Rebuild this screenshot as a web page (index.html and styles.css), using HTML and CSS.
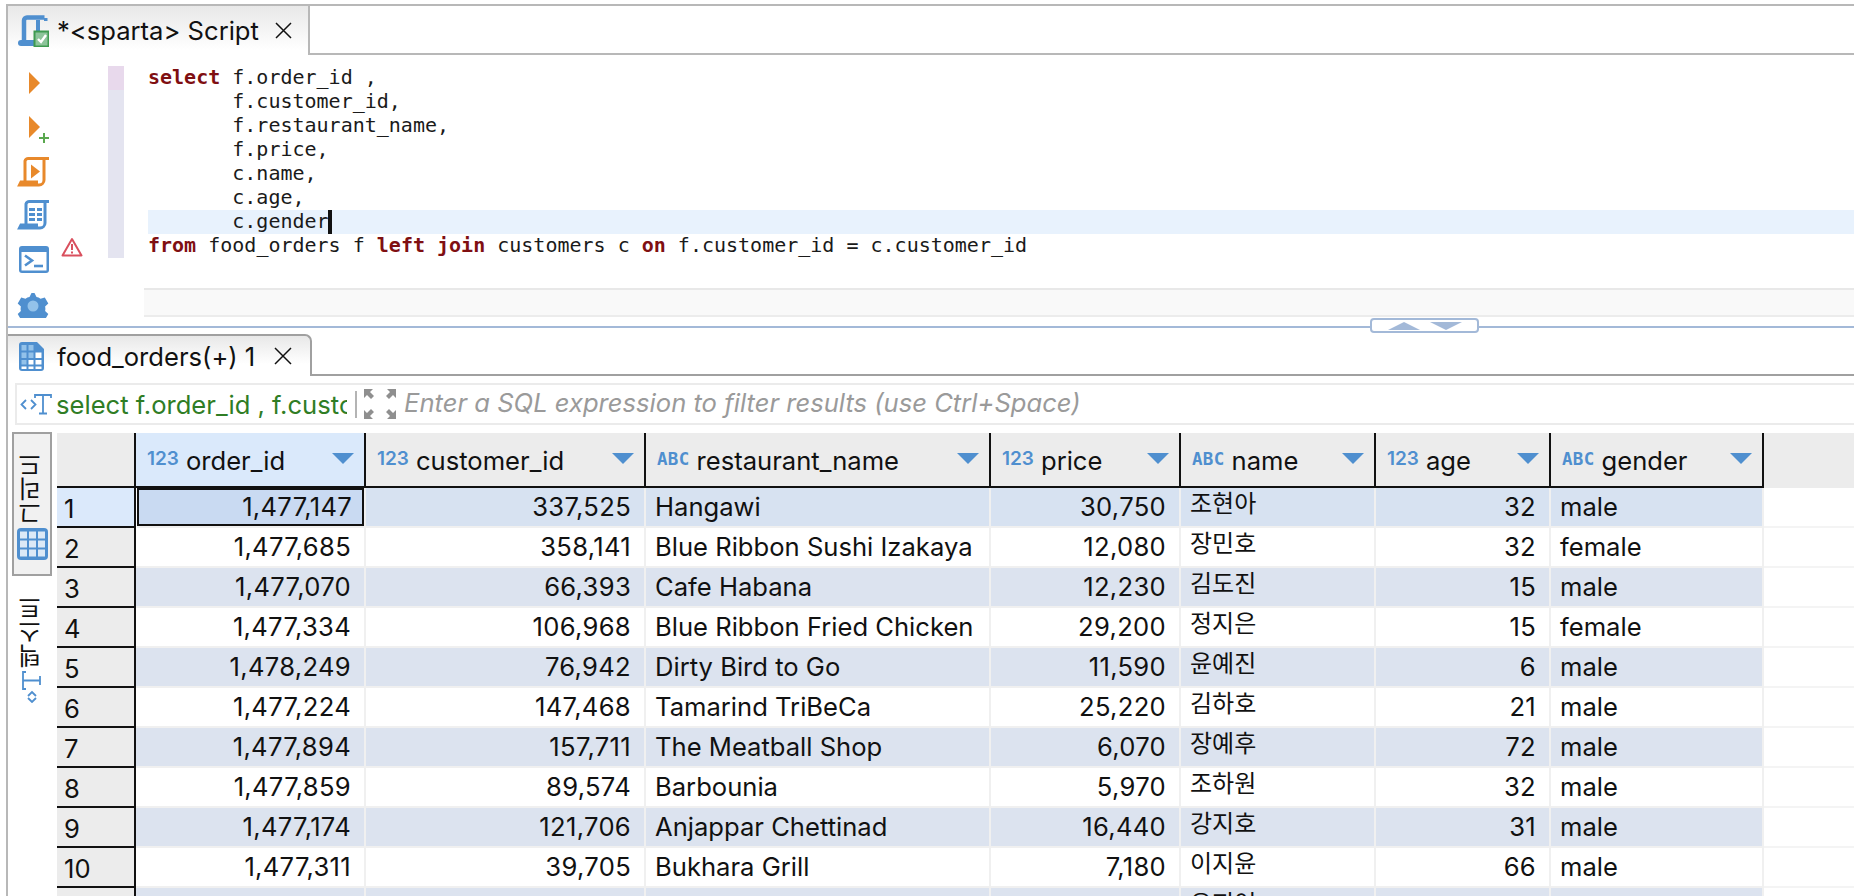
FILE: index.html
```html
<!DOCTYPE html>
<html lang="ko">
<head>
<meta charset="utf-8">
<title>DBeaver Script</title>
<link rel="stylesheet" href="styles.css">
</head>
<body>
<div class="app">
  <div class="tabbar">
    <div class="editor-tab">
      <svg class="tab-icon" width="32" height="32" viewBox="0 0 32 32"><path d="M7 25V5.500A3 3 0 0 1 10 2.500H27.500" fill="none" stroke="#4f8fcf" stroke-width="4.500"/><path d="M27 3H30.500V6H27z" fill="#4f8fcf"/><path d="M21 5V25" stroke="#4f8fcf" stroke-width="4"/><path d="M1 28a3 3 0 0 1 3-3H20v6H4a3 3 0 0 1-3-3z" fill="#4f8fcf"/><rect x="17.500" y="16.500" width="14" height="15" fill="#8dc49a" stroke="#3f9a50" stroke-width="2"/><path d="M21 24l3 3 5-7" fill="none" stroke="#fff" stroke-width="2.400"/></svg>
      <span class="tab-label">*&lt;sparta&gt; Script</span>
      <svg class="close" width="17" height="17" viewBox="0 0 17 17"><path d="M1 1L16 16M16 1L1 16" stroke="#111" stroke-width="1.500"/></svg>
    </div>
    <div class="tabbar-rest"></div>
  </div>

  <div class="editor">
    <div class="side-tools">
      <div class="tool"><svg width="44" height="44" viewBox="0 0 44 44"><path d="M21 11L32 22L21 33z" fill="#e8892b"/></svg></div>
      <div class="tool"><svg width="44" height="44" viewBox="0 0 44 44"><path d="M21 11L32 22L21 33z" fill="#e8892b"/><path d="M36 28V38M31 33H41" stroke="#5aa84f" stroke-width="2"/></svg></div>
      <div class="tool"><svg width="44" height="44" viewBox="0 0 44 44"><path d="M17 32V12A3.500 3.500 0 0 1 20.500 9.500H41" fill="none" stroke="#e8892b" stroke-width="3"/><path d="M36 10V31A5 5 0 0 1 31 36H11.500L13 33H30" fill="none" stroke="#e8892b" stroke-width="3"/><path d="M23 15.500L32 22.500L23 29.500z" fill="#e8892b"/></svg></div>
      <div class="tool"><svg width="44" height="44" viewBox="0 0 44 44"><path d="M18 31V11A3.500 3.500 0 0 1 21.500 8.500H41" fill="none" stroke="#4f8fcf" stroke-width="3"/><path d="M37 9V30A5 5 0 0 1 32 35H11.500L13 32H30" fill="none" stroke="#4f8fcf" stroke-width="3"/><path d="M21 15h6v3h-6zM29 15h5v3h-5zM21 20h6v3h-6zM29 20h5v3h-5zM21 25h6v3h-6zM29 25h5v3h-5z" fill="#4f8fcf"/></svg></div>
      <div class="tool">
        <svg width="44" height="44" viewBox="0 0 44 44"><rect x="11" y="9" width="30" height="27" rx="3" fill="#4f8fcf"/><rect x="13.500" y="15" width="25" height="18.500" fill="#fff"/><path d="M17 18.500L24 23.500L17 28.500" fill="none" stroke="#4f8fcf" stroke-width="2.600"/><path d="M26 29H35" stroke="#4f8fcf" stroke-width="2.600"/></svg>
        <svg class="warn" width="22" height="20" viewBox="0 0 22 20"><path d="M11 2L20.500 18.500H1.500z" fill="#fff" stroke="#d9505e" stroke-width="2" stroke-linejoin="round"/><path d="M11 7V13M11 14.500V16.500" stroke="#d9505e" stroke-width="2"/></svg>
      </div>
      <div class="tool"><svg width="44" height="44" viewBox="0 0 44 44"><path d="M22.500 10l2 4a9 9 0 0 1 4 1.700l4.300-1.200 3.500 6-3.200 3a9 9 0 0 1 0 4.500l3.200 3-3.500 6-4.300-1.200a9 9 0 0 1-4 1.700l-2 4h-3l-2-4a9 9 0 0 1-4-1.700l-4.300 1.200-3.500-6 3.200-3a9 9 0 0 1 0-4.500l-3.200-3 3.500-6 4.300 1.200a9 9 0 0 1 4-1.700l2-4z" transform="translate(4 2)" fill="#4f8fcf"/><circle cx="25" cy="25" r="5.500" fill="#93c2ea"/></svg></div>
    </div>
    <div class="gutter"><div class="gutter-first"></div></div>
    <div class="code-area">
      <div class="code">
        <div class="line"><b>select</b> f.order_id ,</div>
        <div class="line">       f.customer_id,</div>
        <div class="line">       f.restaurant_name,</div>
        <div class="line">       f.price,</div>
        <div class="line">       c.name,</div>
        <div class="line">       c.age,</div>
        <div class="line current">       c.gender<i class="caret"></i></div>
        <div class="line"><b>from</b> food_orders f <b>left</b> <b>join</b> customers c <b>on</b> f.customer_id = c.customer_id</div>
      </div>
      <div class="band"></div>
    </div>
  </div>

  <div class="splitter">
    <div class="handle">
      <svg width="32" height="8" viewBox="0 0 32 8"><path d="M16 0L32 8H0z" fill="#a3b9d8"/></svg>
      <svg width="32" height="8" viewBox="0 0 32 8"><path d="M0 0H32L16 8z" fill="#a3b9d8"/></svg>
    </div>
  </div>

  <div class="result-tabs">
    <div class="result-tab">
      <svg width="26" height="31" viewBox="0 0 26 31"><path d="M3 1H18L25 8V27a3 3 0 0 1-3 3H3a3 3 0 0 1-3-3V4a3 3 0 0 1 3-3z" fill="#4f8fcf"/><path d="M2.500 4h5v5.500h-5zM9.500 4h5v5.500h-5zM2.500 11.500h5V17h-5zM9.500 11.500h5V17h-5zM2.500 19h5v4.500h-5z" fill="#93c2ea"/><path d="M16.500 11.500h6V17h-6zM9.500 19h5v4.500h-5zM16.500 19h6v4.500h-6zM2.500 25.500h5V28h-5zM9.500 25.500h5V28h-5zM16.500 25.500h6V28h-6z" fill="#fff"/></svg>
      <span class="result-label">food_orders(+) 1</span>
      <svg class="close" width="18" height="18" viewBox="0 0 18 18"><path d="M1 1L17 17M17 1L1 17" stroke="#111" stroke-width="1.500"/></svg>
    </div>
  </div>

  <div class="filter">
    <svg class="t-icon" width="32" height="22" viewBox="0 0 32 22"><path d="M6 7L1.500 11.500L6 16M11 7L15.500 11.500L11 16" fill="none" stroke="#4f8fcf" stroke-width="1.800"/><path d="M15 5V2H31V5M23 2V20M19 20.500H27" fill="none" stroke="#4f8fcf" stroke-width="1.800"/></svg>
    <span class="filter-query">select f.order_id , f.customer_id</span>
    <span class="filter-sep"></span>
    <svg class="expand" width="32" height="30" viewBox="0 0 32 30"><path d="M0 0H9L6 3L10 7L7 10L3 6L0 9zM32 0H23L26 3L22 7L25 10L29 6L32 9zM0 30H9L6 27L10 23L7 20L3 24L0 21zM32 30H23L26 27L22 23L25 20L29 24L32 21z" fill="#8f8f8f"/></svg>
    <span class="filter-hint">Enter a SQL expression to filter results (use Ctrl+Space)</span>
  </div>

  <div class="results">
    <div class="view-tabs">
      <div class="view-tab active">
        <span class="view-label">그리드</span>
        <svg width="31" height="32" viewBox="0 0 31 32"><rect width="31" height="32" rx="4" fill="#4f8fcf"/><path d="M3 3.500h7v7H3zM12 3.500h7v7h-7zM21 3.500h7v7h-7zM3 12.500h7v7H3zM12 12.500h7v7h-7zM21 12.500h7v7h-7zM3 21.500h7v7H3zM12 21.500h7v7h-7zM21 21.500h7v7h-7z" fill="#dce9f6"/></svg>
      </div>
      <div class="view-tab">
        <span class="view-label">텍스트</span>
        <svg width="22" height="32" viewBox="0 0 22 32"><path d="M5 1H2V18H5M2 9.500H19M19 5V14" fill="none" stroke="#4f8fcf" stroke-width="1.800"/><path d="M7 25L11 21L15 25M7 27L11 31L15 27" fill="none" stroke="#4f8fcf" stroke-width="1.800"/></svg>
      </div>
    </div>
    <div class="grid">
      <div class="row head">
        <div class="hc corner"></div>
        <div class="hc focused"><span class="ty">123</span><span>order_id</span><i class="arrow"></i></div>
        <div class="hc"><span class="ty">123</span><span>customer_id</span><i class="arrow"></i></div>
        <div class="hc"><span class="ty abc">ABC</span><span>restaurant_name</span><i class="arrow"></i></div>
        <div class="hc"><span class="ty">123</span><span>price</span><i class="arrow"></i></div>
        <div class="hc"><span class="ty abc">ABC</span><span>name</span><i class="arrow"></i></div>
        <div class="hc"><span class="ty">123</span><span>age</span><i class="arrow"></i></div>
        <div class="hc"><span class="ty abc">ABC</span><span>gender</span><i class="arrow"></i></div>
        <div class="hfill"></div>
      </div>
      <div class="row first"><div class="rn">1</div><div class="c num sel">1,477,147</div><div class="c num">337,525</div><div class="c">Hangawi</div><div class="c num">30,750</div><div class="c ko">조현아</div><div class="c num">32</div><div class="c">male</div><div class="fill"></div></div>
      <div class="row"><div class="rn">2</div><div class="c num">1,477,685</div><div class="c num">358,141</div><div class="c">Blue Ribbon Sushi Izakaya</div><div class="c num">12,080</div><div class="c ko">장민호</div><div class="c num">32</div><div class="c">female</div><div class="fill"></div></div>
      <div class="row alt"><div class="rn">3</div><div class="c num">1,477,070</div><div class="c num">66,393</div><div class="c">Cafe Habana</div><div class="c num">12,230</div><div class="c ko">김도진</div><div class="c num">15</div><div class="c">male</div><div class="fill"></div></div>
      <div class="row"><div class="rn">4</div><div class="c num">1,477,334</div><div class="c num">106,968</div><div class="c">Blue Ribbon Fried Chicken</div><div class="c num">29,200</div><div class="c ko">정지은</div><div class="c num">15</div><div class="c">female</div><div class="fill"></div></div>
      <div class="row alt"><div class="rn">5</div><div class="c num">1,478,249</div><div class="c num">76,942</div><div class="c">Dirty Bird to Go</div><div class="c num">11,590</div><div class="c ko">윤예진</div><div class="c num">6</div><div class="c">male</div><div class="fill"></div></div>
      <div class="row"><div class="rn">6</div><div class="c num">1,477,224</div><div class="c num">147,468</div><div class="c">Tamarind TriBeCa</div><div class="c num">25,220</div><div class="c ko">김하호</div><div class="c num">21</div><div class="c">male</div><div class="fill"></div></div>
      <div class="row alt"><div class="rn">7</div><div class="c num">1,477,894</div><div class="c num">157,711</div><div class="c">The Meatball Shop</div><div class="c num">6,070</div><div class="c ko">장예후</div><div class="c num">72</div><div class="c">male</div><div class="fill"></div></div>
      <div class="row"><div class="rn">8</div><div class="c num">1,477,859</div><div class="c num">89,574</div><div class="c">Barbounia</div><div class="c num">5,970</div><div class="c ko">조하원</div><div class="c num">32</div><div class="c">male</div><div class="fill"></div></div>
      <div class="row alt"><div class="rn">9</div><div class="c num">1,477,174</div><div class="c num">121,706</div><div class="c">Anjappar Chettinad</div><div class="c num">16,440</div><div class="c ko">강지호</div><div class="c num">31</div><div class="c">male</div><div class="fill"></div></div>
      <div class="row"><div class="rn">10</div><div class="c num">1,477,311</div><div class="c num">39,705</div><div class="c">Bukhara Grill</div><div class="c num">7,180</div><div class="c ko">이지윤</div><div class="c num">66</div><div class="c">male</div><div class="fill"></div></div>
      <div class="row alt"><div class="rn"></div><div class="c num"></div><div class="c num"></div><div class="c"></div><div class="c num"></div><div class="c ko">유지연</div><div class="c num"></div><div class="c"></div><div class="fill"></div></div>
    </div>
  </div>
</div>
</body>
</html>
```

FILE: styles.css
```css
* { box-sizing: border-box; }
html, body { margin: 0; height: 896px; overflow: hidden; background: #fff; }
body { font-family: Inter, "Noto Sans CJK KR", sans-serif; font-size: 25.6px; color: #111; }

.app {
  margin: 4px 0 0 6px;
  height: 892px;
  border-top: 2px solid #b8b8b8;
  border-left: 2px solid #b8b8b8;
  overflow: hidden;
}

/* top tab bar */
.tabbar { display: flex; height: 49px; }
.editor-tab {
  width: 302px;
  display: flex;
  align-items: center;
  padding-left: 9px;
  background: linear-gradient(#e8e8e8, #fff 90%);
  border-right: 2px solid #b8b8b8;
}
.tab-label { margin-left: 8px; white-space: pre; }
.close { margin-left: 16px; flex: none; }
.tabbar-rest { flex: 1; border-bottom: 2px solid #b8b8b8; }

/* editor */
.editor { display: flex; height: 271px; }
.side-tools { width: 100px; height: 263px; padding-top: 6px; overflow: hidden; flex: none; }
.tool { display: flex; height: 44px; }
.warn { margin-left: 9px; }
.gutter { width: 16px; height: 192px; margin-top: 11px; background: #e4e4f0; flex: none; }
.gutter-first { height: 24px; background: #e8d9ec; }
.code-area { flex: 1; margin-left: 24px; padding-top: 11px; min-width: 0; }
.code {
  font-family: "DejaVu Sans Mono", monospace;
  font-size: 20px;
  color: #1a1a1a;
  height: 192px;
}
.code b { color: #7f0f12; font-weight: 700; }
.line { height: 24px; line-height: 22px; white-space: pre; }
.current { background: #e8f2fd; }
.caret { display: inline-block; width: 4px; height: 24px; margin-left: -1px; background: #111; vertical-align: top; }
.band {
  height: 29px;
  margin: 30px 0 0 -4px;
  background: #f9f9f9;
  border-top: 2px solid #e8e8e8;
  border-bottom: 2px solid #ececec;
}

/* splitter */
.splitter { position: relative; height: 2px; background: #a3b9d8; }
.handle {
  position: absolute;
  left: 1362px;
  top: -8px;
  width: 109px;
  height: 15px;
  display: flex;
  justify-content: center;
  align-items: center;
  gap: 10px;
  background: #fff;
  border: 2px solid #a3b9d8;
  border-radius: 4px;
}

/* result tab */
.result-tabs { display: flex; height: 48px; padding-top: 6px; border-bottom: 2px solid #a0a0a0; }
.result-tab {
  width: 304px;
  height: 42px;
  display: flex;
  align-items: center;
  padding-left: 11px;
  background: linear-gradient(#e8e8e8, #fff 70%);
  border-top: 2px solid #a0a0a0;
  border-right: 2px solid #a0a0a0;
  border-top-right-radius: 7px;
}
.result-tab .close { margin-left: 19px; }
.result-label { margin-left: 12px; white-space: pre; }

/* filter */
.filter {
  display: flex;
  align-items: center;
  height: 42px;
  margin: 7px 0 7px 7px;
  border: 2px solid #ebebeb;
  border-right: 0;
  padding-left: 3px;
  overflow: hidden;
}
.t-icon { flex: none; }
.filter-query { width: 291px; margin-left: 4px; overflow: hidden; white-space: pre; color: #2f7d25; flex: none; }
.filter-sep { width: 2px; height: 27px; margin-left: 8px; background: #b4b4b4; flex: none; }
.expand { margin-left: 7px; flex: none; }
.filter-hint { margin-left: 8px; padding-bottom: 3px; font-style: italic; color: #9a9a9a; white-space: pre; }

/* main result area */
.results { display: flex; }
.view-tabs { width: 49px; flex: none; padding: 0 5px 0 4px; display: flex; flex-direction: column; align-items: center; }
.view-tab {
  width: 40px;
  height: 144px;
  display: flex;
  flex-direction: column;
  align-items: center;
  justify-content: flex-end;
  gap: 3px;
  padding-bottom: 15px;
  border: 2px solid transparent;
}
.view-tab.active { background: #f1f1f1; border-color: #a0a0a0; padding-bottom: 14px; }
.view-label {
  writing-mode: vertical-rl;
  transform: rotate(180deg);
  margin-right: 4px;
  font-family: "Noto Sans CJK KR", sans-serif;
  font-size: 24px;
  line-height: 28px;
}

.grid { flex: 1; padding-top: 1px; min-width: 0; }
.row {
  display: grid;
  grid-template-columns: 79px 230px 280px 345px 190px 195px 175px 213px 1fr;
  height: 40px;
}
.row.head { height: 55px; }
.hc {
  display: flex;
  align-items: center;
  padding: 2px 10px 0 11px;
  background: #ececec;
  border-right: 2px solid #111;
  border-bottom: 2px solid #111;
}
.hc.focused { background: #dae9fb; }
.hfill { background: #ececec; }
.ty { color: #4f8fcf; font-size: 19px; font-weight: 600; margin: -4px 7px 0 0; }
.ty.abc { font-family: "DejaVu Sans Mono", monospace; font-weight: 700; font-size: 17.500px; letter-spacing: 0.300px; }
.arrow {
  width: 0;
  height: 0;
  margin: -4px 0 0 auto;
  border-left: 11px solid transparent;
  border-right: 11px solid transparent;
  border-top: 11px solid #4f8fcf;
}
.rn {
  display: flex;
  align-items: center;
  padding: 2px 0 0 7px;
  background: #ececec;
  border-right: 2px solid #111;
  border-bottom: 2px solid #111;
}
.c {
  display: flex;
  align-items: center;
  padding: 0 9px 2px;
  white-space: nowrap;
  overflow: hidden;
  border-right: 2px solid #f0f0f0;
  border-bottom: 2px solid #f0f0f0;
}
.alt .c { background: #dce3ef; }
.first .c { background: #d7e2f1; }
.first .rn { background: #dbe9fb; }
.c.num { justify-content: flex-end; padding-right: 13px; letter-spacing: 0.300px; }
.c.ko { font-family: "Noto Sans CJK KR", sans-serif; font-size: 24px; line-height: 24px; padding-bottom: 10px; }
.first .c.sel { background: #c9daf2; box-shadow: inset 0 0 0 2px #111; margin-left: 1px; padding-right: 12px; }
.fill { border-bottom: 2px solid #f4f4f4; }
```
